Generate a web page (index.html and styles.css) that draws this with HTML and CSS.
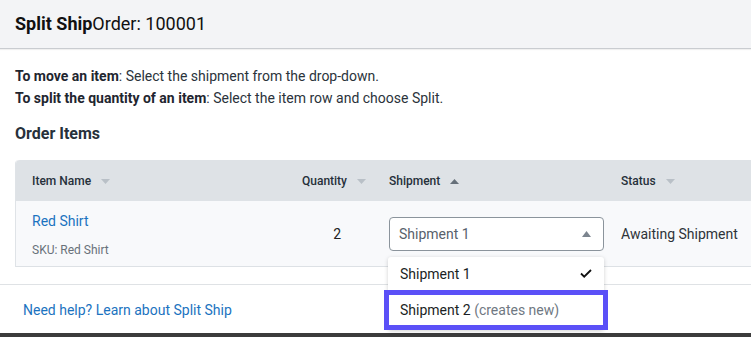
FILE: index.html
```html
<!DOCTYPE html>
<html lang="en">
<head>
<meta charset="utf-8">
<title>Split Ship</title>
<link rel="stylesheet" href="styles.css">
</head>
<body>
<div class="modal">
  <header class="modal-head">
    <h1 class="title"><b>Split Ship</b>Order: 100001</h1>
  </header>
  <div class="modal-body">
    <p class="hint"><b>To move an item</b>: Select the shipment from the drop-down.</p>
    <p class="hint"><b>To split the quantity of an item</b>: Select the item row and choose Split.</p>
    <h2 class="section-title">Order Items</h2>
    <div class="table">
      <div class="thead">
        <div class="th th-item">Item Name <svg class="caret" width="9" height="5" viewBox="0 0 9 5"><path d="M0 0h9L4.5 5z"/></svg></div>
        <div class="th th-qty">Quantity <svg class="caret" width="9" height="5" viewBox="0 0 9 5"><path d="M0 0h9L4.5 5z"/></svg></div>
        <div class="th th-ship">Shipment <svg class="caret caret-active" width="9" height="5" viewBox="0 0 9 5"><path d="M0 5h9L4.5 0z"/></svg></div>
        <div class="th th-status">Status <svg class="caret" width="9" height="5" viewBox="0 0 9 5"><path d="M0 0h9L4.5 5z"/></svg></div>
      </div>
      <div class="trow">
        <div class="td td-item">
          <a class="item-link" href="#">Red Shirt</a>
          <span class="sku">SKU: Red Shirt</span>
        </div>
        <div class="td td-qty">2</div>
        <div class="td td-ship">
          <div class="select-wrap">
            <div class="select">
              <span>Shipment 1</span>
              <svg class="select-caret" width="9" height="6" viewBox="0 0 9 6"><path d="M0 6h9L4.5 0z"/></svg>
            </div>
            <div class="menu">
              <div class="option">
                <span>Shipment 1</span>
                <svg class="check" width="12" height="9" viewBox="0 0 12 9"><path d="M1 4.5l3.2 3.2L11 1" fill="none" stroke="#111" stroke-width="1.8"/></svg>
              </div>
              <div class="option option-new">
                <span>Shipment 2 <span class="muted">(creates new)</span></span>
              </div>
            </div>
          </div>
        </div>
        <div class="td td-status">Awaiting Shipment</div>
      </div>
    </div>
  </div>
  <footer class="modal-foot">
    <a class="help-link" href="#">Need help? Learn about Split Ship</a>
  </footer>
</div>
<div class="bottom-strip"></div>
</body>
</html>
```
FILE: styles.css
```css
html, body {
  margin: 0;
  padding: 0;
  background: #ffffff;
  overflow: hidden;
}
body {
  font-family: Roboto, "Noto Sans", Arial, sans-serif;
  color: #1f2933;
  width: 751px;
  height: 337px;
}
.modal {
  background: #ffffff;
}
.modal-head {
  height: 48px;
  background: #f3f4f6;
  border-bottom: 1px solid #c9ccd0;
  box-shadow: 0 1px 1px rgba(0, 0, 0, 0.06);
  padding: 0 15px;
}
.title {
  margin: 0;
  font-size: 18px;
  line-height: 48px;
  font-weight: 400;
  color: #111;
}
.title b {
  font-weight: 700;
}
.modal-body {
  padding: 16px 0 17px 15px;
}
.hint {
  margin: 0;
  font-size: 14px;
  line-height: 22px;
  color: #2b333b;
}
.hint b {
  font-weight: 700;
  color: #1f2630;
}
.section-title {
  margin: 15px 0 16px;
  font-size: 16px;
  line-height: 20px;
  font-weight: 700;
  color: #27313b;
}
.table {
  width: 760px;
  border-left: 1px solid #dfe3e7;
  border-top-left-radius: 4px;
  overflow: visible;
}
.thead, .trow {
  display: grid;
  grid-template-columns: 274px 84px 232px 1fr;
}
.thead {
  height: 41px;
  background: #dee2e6;
  border-top-left-radius: 4px;
}
.th {
  display: flex;
  align-items: center;
  gap: 10px;
  font-size: 12px;
  font-weight: 500;
  color: #26303a;
  padding-top: 1px;
}
.th-item { padding-left: 16px; }
.th-qty { justify-content: flex-end; padding-right: 8px; }
.th-ship { padding-left: 15px; }
.th-status { padding-left: 15px; }
.caret path { fill: #b9c0c7; }
.caret-active path { fill: #66707a; }
.trow {
  height: 65px;
  background: #f8f9fb;
  border-bottom: 1px solid #dde1e5;
}
.td {
  display: flex;
  align-items: center;
  font-size: 14px;
  color: #2a2f35;
}
.td-item {
  flex-direction: column;
  align-items: flex-start;
  justify-content: flex-start;
  padding: 11px 0 0 16px;
  gap: 12px;
}
.item-link {
  font-size: 14px;
  line-height: 18px;
  color: #1b73c0;
  text-decoration: none;
}
.sku {
  font-size: 12px;
  line-height: 16px;
  color: #68717a;
}
.td-qty {
  justify-content: flex-end;
  padding-right: 33px;
  color: #222;
}
.td-ship {
  padding-left: 15px;
}
.td-status {
  padding-left: 15px;
  color: #2e3339;
}
.select-wrap {
  position: relative;
  width: 215px;
}
.select {
  box-sizing: border-box;
  height: 34px;
  border: 1px solid #8b949c;
  border-radius: 4px;
  background: #ffffff;
  display: flex;
  align-items: center;
  justify-content: space-between;
  padding: 0 12px 0 9px;
  font-size: 14px;
  color: #58616b;
}
.select-caret path { fill: #7c858f; }
.menu {
  position: absolute;
  top: 40px;
  left: -1px;
  width: 216px;
  background: #ffffff;
  border-radius: 3px;
  box-shadow: 0 1px 4px rgba(0, 0, 0, 0.18);
  z-index: 5;
}
.option {
  box-sizing: border-box;
  height: 34px;
  display: flex;
  align-items: center;
  justify-content: space-between;
  padding: 0 12px 0 12px;
  font-size: 14px;
  color: #1b1f24;
}
.option-new {
  height: 40px;
  margin: -1px -4px 0;
  padding-left: 11px;
  border: 5px solid #5b50f7;
  background: #ffffff;
}
.muted {
  color: #6f7882;
}
.modal-foot {
  border-top: 1px solid #dfe2e5;
  padding: 15px 23px 13px;
  font-size: 14px;
  line-height: 20px;
}
.help-link {
  color: #1b73c0;
  text-decoration: none;
}
.bottom-strip {
  height: 4px;
  background: #3c3c3c;
}
```
